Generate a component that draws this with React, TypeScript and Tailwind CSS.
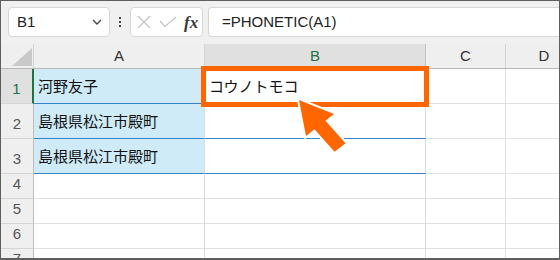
import React from 'react';

const ui = { fontFamily: '"Liberation Sans", "Noto Sans CJK JP", sans-serif' };
const jp = { fontFamily: '"Noto Sans CJK JP", "Liberation Sans", sans-serif' };

const rows = [
  { n: '1', h: 'h-[35px]', a: '河野友子', b: 'コウノトモコ', active: true },
  { n: '2', h: 'h-[35px]', a: '島根県松江市殿町', b: '' },
  { n: '3', h: 'h-[35px]', a: '島根県松江市殿町', b: '' },
  { n: '4', h: 'h-[25px]', a: '', b: '' },
  { n: '5', h: 'h-[25px]', a: '', b: '' },
  { n: '6', h: 'h-[25px]', a: '', b: '' },
  { n: '7', h: 'h-[25px]', a: '', b: '' },
];

const FormulaBar: React.FC = () => (
  <div className="flex h-[43px] shrink-0 items-start bg-[#f0f0f0] pl-[7px] pt-[6px]" style={ui}>
    <div className="flex h-[30px] w-[102px] items-center justify-between rounded-[4px] border border-[#d6d6d6] bg-white pl-[8px] pr-[7px]">
      <span className="text-[15px] text-[#222]">B1</span>
      <svg width="10" height="6" viewBox="0 0 10 6">
        <path d="M1 1 L5 5 L9 1" fill="none" stroke="#444" strokeWidth="1.3" />
      </svg>
    </div>
    <div className="flex h-[30px] w-[20px] flex-col items-center justify-center gap-[2px]">
      <span className="h-[2px] w-[2px] bg-[#444]" />
      <span className="h-[2px] w-[2px] bg-[#444]" />
      <span className="h-[2px] w-[2px] bg-[#444]" />
    </div>
    <div className="flex h-[30px] w-[73px] items-center rounded-[4px] border border-[#d6d6d6] bg-white pl-[6px]">
      <svg width="14" height="14" viewBox="0 0 14 14">
        <path d="M1 1 L13 13 M13 1 L1 13" stroke="#c4c4c4" strokeWidth="1.2" />
      </svg>
      <svg className="ml-[8px]" width="18" height="12" viewBox="0 0 18 12">
        <path d="M1 5 L6 10.5 L17 1" fill="none" stroke="#c4c4c4" strokeWidth="1.2" />
      </svg>
      <span
        className="ml-[7px] text-[17px] font-bold italic leading-none text-[#3a3a3a]"
        style={{ fontFamily: '"Liberation Serif", serif' }}
      >
        fx
      </span>
    </div>
    <div className="ml-[5px] flex h-[30px] flex-1 items-center rounded-l-[4px] border border-r-0 border-[#d6d6d6] bg-white pl-[13px]">
      <span className="text-[15px] text-[#222]">=PHONETIC(A1)</span>
    </div>
  </div>
);

const HeaderRow: React.FC = () => (
  <div className="flex h-[25px] shrink-0 border-b border-[#b8b8b8] bg-[#efefef] text-[15px] text-[#333]" style={ui}>
    <div className="flex w-[33px] shrink-0 items-end justify-end border-r border-[#d4d4d4] pb-[2px] pr-[1px]">
      <svg width="20" height="18" viewBox="0 0 20 18">
        <path d="M20 0 L20 18 L0 18 Z" fill="#c9c9c9" />
      </svg>
    </div>
    <div className="flex w-[171px] shrink-0 items-center justify-center border-r border-[#d4d4d4]">A</div>
    <div className="flex w-[221px] shrink-0 items-center justify-center border-r border-[#c4c4c4] bg-[#e0e0e0] text-[#217346]">
      B
    </div>
    <div className="flex w-[80px] shrink-0 items-center justify-center border-r border-[#d4d4d4]">C</div>
    <div className="flex w-[76px] shrink-0 items-center justify-center">D</div>
  </div>
);

export default function App() {
  return (
    <div className="relative flex h-[260px] w-[560px] flex-col overflow-hidden border border-b-2 border-[#5f5f5f] bg-white">
      <FormulaBar />
      <HeaderRow />
      {rows.map((r) => {
        const blue = r.n === '2' || r.n === '3';
        const filled = r.a !== '' || r.n === '1';
        return (
          <div key={r.n} className={`flex ${r.h} shrink-0`}>
            <div
              className={`flex w-[33px] shrink-0 items-end justify-center border-b border-[#d4d4d4] pb-[3px] text-[15px] ${
                r.active
                  ? 'border-r-2 border-r-[#217346] bg-[#e0e0e0] text-[#217346]'
                  : 'border-r border-r-[#bdbdbd] bg-[#efefef] text-[#555]'
              }`}
              style={ui}
            >
              {r.n}
            </div>
            <div
              className={`flex w-[171px] shrink-0 items-center border-r border-[#dcdcdc] pl-[4px] text-[15px] text-[#111] ${
                filled ? 'border-b border-b-[#3583c9] bg-[#cfebf8]' : 'border-b border-b-[#e1e1e1]'
              } ${r.active ? 'w-[170px] pl-[3px]' : ''}`}
              style={jp}
            >
              {r.a}
            </div>
            <div
              className={`flex w-[221px] shrink-0 items-center border-r border-[#dcdcdc] pl-[4px] text-[15px] text-[#111] ${
                blue ? 'border-b border-b-[#3583c9]' : 'border-b border-b-[#e1e1e1]'
              }`}
              style={jp}
            >
              {r.b}
            </div>
            <div className="w-[80px] shrink-0 border-b border-r border-[#e1e1e1]" />
            <div className="w-[76px] shrink-0 border-b border-[#e1e1e1]" />
          </div>
        );
      })}

      {/* highlight box over B1 */}
      <div className="pointer-events-none absolute left-[200px] top-[65px] h-[41px] w-[228px] border-[5px] border-[#ff6600]" />

      {/* arrow pointing at B1 */}
      <svg className="pointer-events-none absolute left-0 top-0" width="560" height="260" viewBox="-1 -1 560 260">
        <polygon
          points="297,98 304,134 312.5,127.3 332.5,149.8 343.5,141.2 323.5,118.7 332,112"
          fill="#ff6600"
          stroke="#ffffff"
          strokeWidth="4"
          strokeLinejoin="miter"
          paintOrder="stroke"
        />
      </svg>
    </div>
  );
}
